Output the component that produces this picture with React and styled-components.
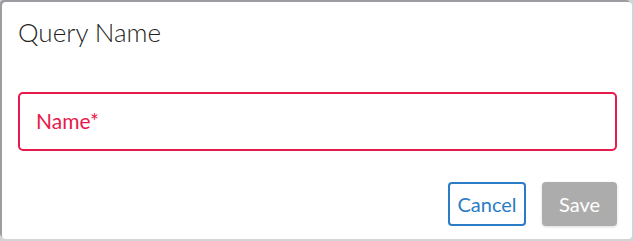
import styled, { createGlobalStyle } from 'styled-components'

const GlobalStyle = createGlobalStyle`
  html, body {
    margin: 0;
    padding: 0;
    background: #d4d4d6;
    font-family: Lato, "Open Sans", "Liberation Sans", sans-serif;
  }
  * { box-sizing: border-box; }
`

/* ── Frame ── */
const Backdrop = styled.div`
  width: 634px;
  height: 241px;
  padding: 2px;
`

const Dialog = styled.div`
  width: 630px;
  height: 237px;
  background: #fff;
  border-radius: 4px;
  box-shadow: -2px -2px 0 #9d9da1;
  padding: 15px 15px 13px 16px;
  display: flex;
  flex-direction: column;
`

const Title = styled.h2`
  margin: 0;
  font-size: 26px;
  font-weight: 300;
  color: #1f1f1f;
  line-height: 30px;
`

/* ── Field ── */
const Field = styled.div`
  margin-top: 45px;
  height: 59px;
  border: 2px solid #e8194b;
  border-radius: 5px;
  display: flex;
  align-items: center;
  padding: 0 16px;
`

const Placeholder = styled.span`
  font-size: 21px;
  color: #e8194b;
  margin-top: -2px;
`

/* ── Actions ── */
const Actions = styled.div`
  margin-top: auto;
  display: flex;
  justify-content: flex-end;
  gap: 16px;
`

const Btn = styled.button`
  height: 44px;
  padding: 0 6px;
  border-radius: 4px;
  font-family: inherit;
  font-size: 20px;
  font-weight: 400;
  cursor: pointer;
  border: 2px solid transparent;

  ${({ $variant }) => $variant === 'outline' && `
    background: #fff;
    border-color: #2b7cc6;
    color: #2b7cc6;
    width: 78px;
  `}
  ${({ $variant }) => $variant === 'disabled' && `
    background: #acacac;
    color: #fff;
    width: 75px;
    box-shadow: 0 1px 3px rgba(0, 0, 0, 0.15);
  `}
`

export default function App() {
  return (
    <>
      <GlobalStyle />
      <Backdrop>
        <Dialog>
          <Title>Query Name</Title>
          <Field>
            <Placeholder>Name*</Placeholder>
          </Field>
          <Actions>
            <Btn $variant="outline">Cancel</Btn>
            <Btn $variant="disabled" disabled>Save</Btn>
          </Actions>
        </Dialog>
      </Backdrop>
    </>
  )
}
